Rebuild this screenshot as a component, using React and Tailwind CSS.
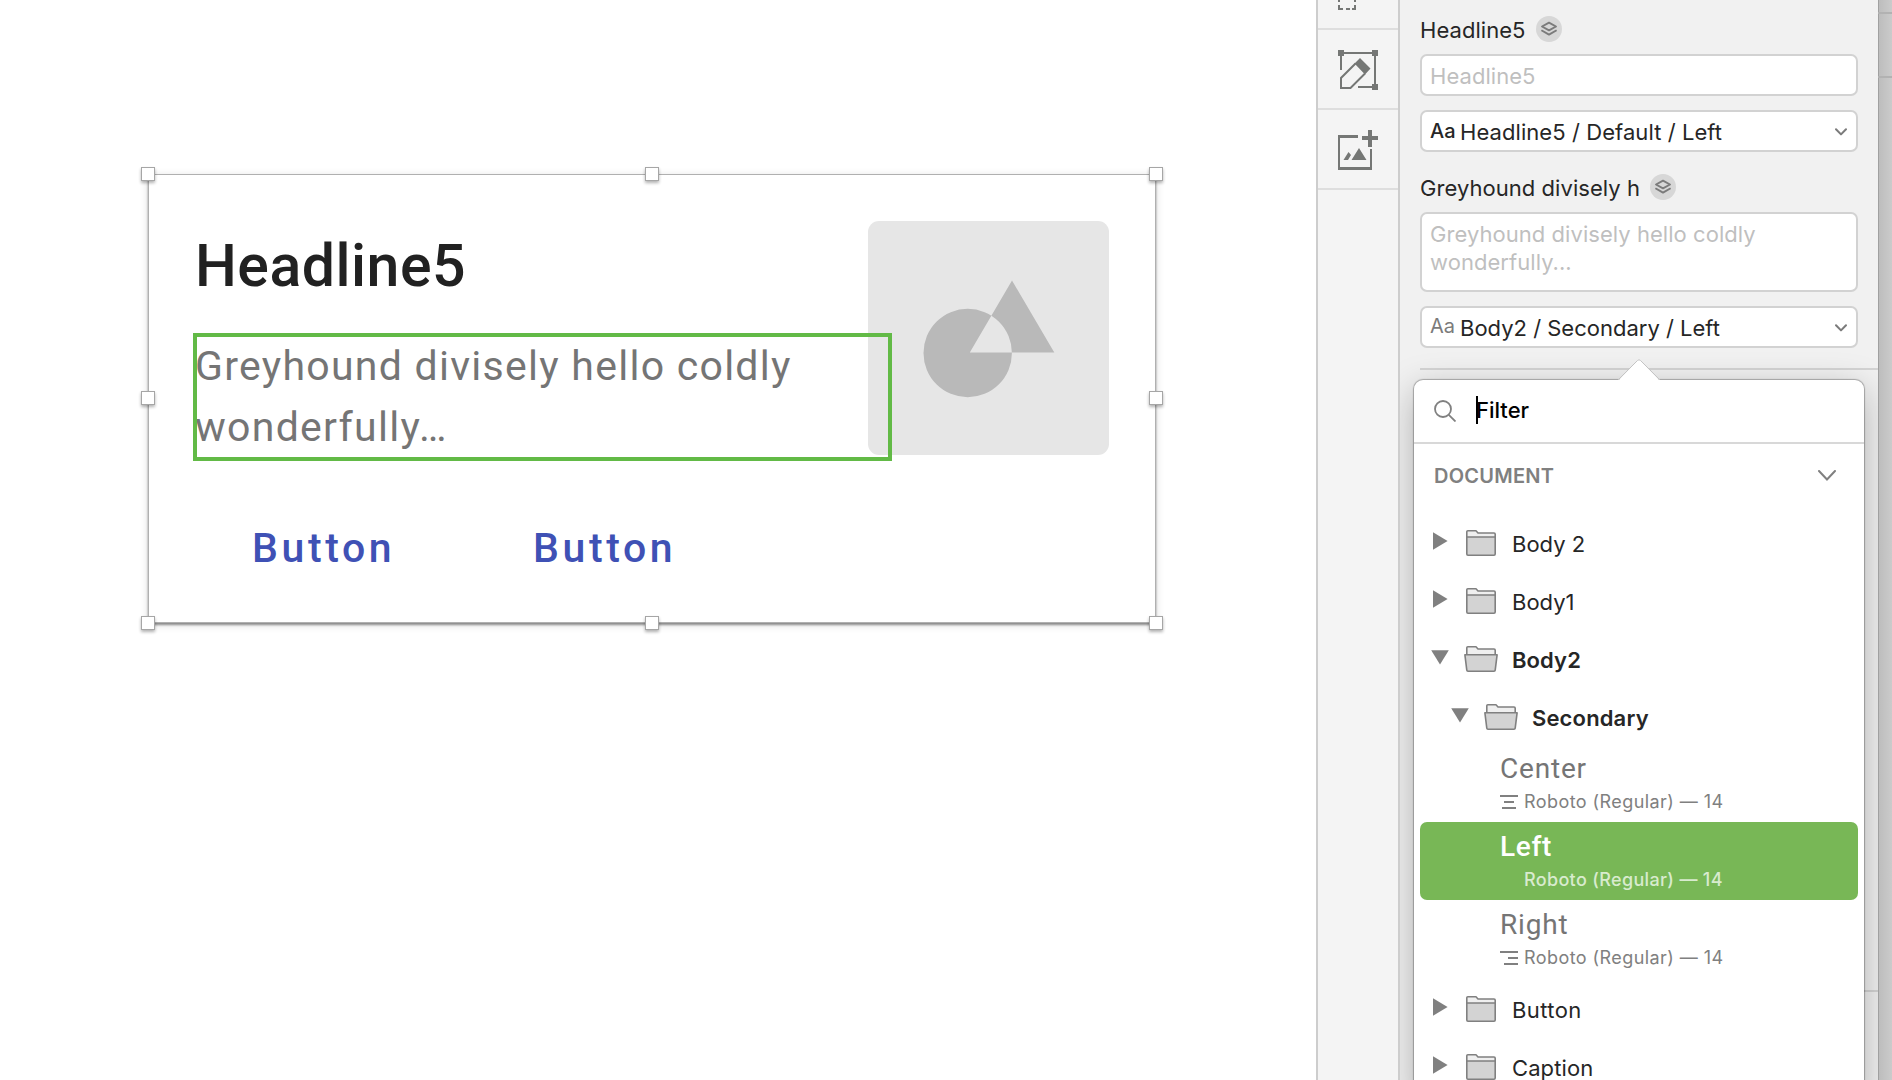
import React from "react";

const Handle = ({ pos }) => (
  <div className={`absolute size-[14px] border border-[#a6a6a6] bg-white shadow-[0_2px_3px_rgba(0,0,0,0.3)] ${pos}`} />
);

const handles = [
  "-left-[8px] -top-[8px]",
  "left-[496px] -top-[8px]",
  "left-[1000px] -top-[8px]",
  "-left-[8px] top-[216px]",
  "left-[1000px] top-[216px]",
  "-left-[8px] top-[441px]",
  "left-[496px] top-[441px]",
  "left-[1000px] top-[441px]",
];

const ShapesArt = () => (
  <svg viewBox="0 0 241 234" className="h-[234px] w-[241px]">
    <path
      fillRule="evenodd"
      fill="#b9b9b9"
      d="M55.5 132a44.2 44.2 0 1 0 88.4 0a44.2 44.2 0 1 0 -88.4 0ZM144 59.5L186.3 131.5H101.8Z"
    />
  </svg>
);

const Layers = () => (
  <span className="grid size-[26px] place-items-center rounded-full bg-[#d7d7d7]">
    <svg viewBox="0 0 18 16" className="h-4 w-[18px]" fill="none" stroke="#7b7b7b" strokeWidth="1.9" strokeLinejoin="round">
      <path d="M9 1.6L16 5.5L9 9.4L2 5.5Z" />
      <path d="M1.4 9.2L9 13.6L16.6 9.2" />
    </svg>
  </span>
);

const SmallChevron = () => (
  <svg viewBox="0 0 12 8" className="mt-px h-2 w-3" fill="none" stroke="#7b7b7b" strokeWidth="2" strokeLinecap="round" strokeLinejoin="round">
    <path d="M1 1.2L6 6.4L11 1.2" />
  </svg>
);

const Folder = ({ open }) =>
  open ? (
    <svg viewBox="0 0 34 26" className="h-[26px] w-[34px]" stroke="#808080" strokeWidth="1.6" strokeLinejoin="round">
      <path fill="#efefef" d="M2.8 9V1.8Q2.8 .8 3.8 .8H12L14 3H30Q31.2 3 31.2 4.2V9" />
      <path fill="#d3d3d3" d="M.9 8.8H33.1L31.2 24.2Q31.1 25.2 30 25.2H4Q2.9 25.2 2.8 24.2Z" />
    </svg>
  ) : (
    <svg viewBox="0 0 34 26" className="h-[26px] w-[34px]" stroke="#808080" strokeWidth="1.6" strokeLinejoin="round">
      <path fill="#efefef" d="M2.8 7V1.8Q2.8 .8 3.8 .8H12L14 3H30Q31.2 3 31.2 4.2V7" />
      <path fill="#d3d3d3" d="M2.8 7H31.2V24Q31.2 25.2 30 25.2H4Q2.8 25.2 2.8 24Z" />
    </svg>
  );

const FolderRow = ({ label, open, nested, tracking }) => (
  <div className={`flex h-[58px] items-center ${nested ? "pl-9" : "pl-4"}`}>
    <svg viewBox="0 0 20 20" className={`h-5 w-5 ${open ? "mt-[2px]" : ""}`} fill="#808080">
      {open ? <path d="M1.2 2.2H18.8L10 16.6Z" /> : <path d="M3 1.2V18.8L17.6 10Z" />}
    </svg>
    <div className="ml-[14px] mt-[4px]">
      <Folder open={open} />
    </div>
    <div className={`ml-[14px] mt-[6px] whitespace-nowrap text-[22px] leading-7 text-[#262626] ${open ? "font-semibold" : ""} ${tracking}`}>
      {label}
    </div>
  </div>
);

const AlignIcon = ({ kind }) => (
  <svg viewBox="0 0 18 14" className="mb-px h-[14px] w-[18px]" fill="none" stroke="#808080" strokeWidth="2">
    {kind === "center" && <path d="M0 1H18M4 7H14M2 13H16" />}
    {kind === "right" && <path d="M0 1H18M8 7H18M4 13H18" />}
  </svg>
);

const StyleRow = ({ label, kind, selected, tracking }) => (
  <div className={`mx-[6px] flex h-[78px] flex-col rounded-[7px] pl-20 ${selected ? "bg-[#78b756] text-white" : "text-[#757575]"}`}>
    <div className={`mt-[8px] h-[34px] font-[Roboto] text-[28px] leading-[34px] ${selected ? "font-medium" : ""} ${tracking}`}>{label}</div>
    <div className="mt-[4px] flex h-6 items-center gap-[6px]">
      <AlignIcon kind={kind} />
      <span className={`whitespace-nowrap text-[18px] leading-6 ${selected ? "font-medium tracking-[0.33px] text-[#d8ebce]" : "tracking-[0.43px] text-[#808080]"}`}>
        Roboto (Regular) — 14
      </span>
    </div>
  </div>
);

const SelectBox = ({ label, strong }) => (
  <div className="flex h-[42px] w-[438px] items-center rounded-[7px] border-2 border-[#d2d2d2] bg-white pl-2 pr-[9px]">
    <span className={`w-[30px] text-[20px] ${strong ? "font-medium text-[#262626]" : "pb-[3px] text-[#7b7b7b]"}`}>Aa</span>
    <span className={`mt-[2px] flex-1 whitespace-nowrap text-[22px] leading-7 text-[#262626] ${strong ? "tracking-[0.07px]" : "tracking-normal"}`}>{label}</span>
    <SmallChevron />
  </div>
);

const Toolbar = () => (
  <div className="flex w-[84px] shrink-0 flex-col border-x-2 border-[#cdcdcd] bg-[#f4f4f4]">
    <div className="h-[30px] border-b-2 border-[#dedede] pl-5">
      <svg viewBox="0 0 18 10" className="h-[10px] w-[18px]" fill="none" stroke="#757775" strokeWidth="2">
        <path d="M1 0V2M17 0V2M1 5V9H5M8 9H12M14 9H17V5" />
      </svg>
    </div>
    <div className="grid h-20 place-items-center border-b-2 border-[#dedede] pt-[2px]">
      <svg viewBox="0 0 40 40" className="size-10" fill="none" stroke="#757775" strokeWidth="2">
        <path d="M3 20V3H37V37H20" />
        <path fill="#757775" stroke="none" d="M0 0H6V6H0ZM34 0H40V6H34ZM34 34H40V40H34ZM22 8L32.5 18.5L27 24.5L16.5 13.5Z" />
        <path d="M17.5 13.5L3 28V38H12.5L27 23.5" />
      </svg>
    </div>
    <div className="grid h-20 place-items-center border-b-2 border-[#dedede] pt-[2px]">
      <svg viewBox="0 0 40 40" className="size-10" fill="none" stroke="#757775" strokeWidth="2">
        <path d="M20 6H1V38.5H33V19" />
        <path strokeWidth="3" d="M0 38.5H34" />
        <path strokeWidth="3" d="M0 6.5H20" />
        <path strokeWidth="4" d="M24 8H40M32 0V17" />
        <path fill="#757775" stroke="none" d="M13.5 30L21 18L28.5 30ZM5.5 30L10.5 22L13 25L10 30Z" />
      </svg>
    </div>
  </div>
);

const Popover = () => (
  <div className="absolute left-[14px] top-[380px] h-[720px] w-[450px] rounded-[9px] bg-white shadow-[0_0_1px_1px_rgba(0,0,0,0.28),0_10px_36px_rgba(0,0,0,0.28)]">
    <svg viewBox="0 0 42 22" className="absolute -top-[21px] left-[204px] h-[22px] w-[42px]">
      <path d="M0 22L19.5 1.5Q21 0 22.5 1.5L42 22Z" fill="#fff" />
      <path d="M0 21L19.5 1.5Q21 0 22.5 1.5L42 21" fill="none" stroke="#c4c4c4" strokeWidth="1" />
    </svg>
    <div className="flex h-16 items-center border-b-2 border-[#d8d8d8] pl-5">
      <svg viewBox="0 0 22 22" className="size-[22px]" fill="none" stroke="#808080" strokeWidth="1.8">
        <circle cx="9" cy="9" r="8" />
        <path d="M14.8 14.8L21.5 21.5" />
      </svg>
      <span className="mb-[2px] ml-5 h-7 w-[2px] bg-black" />
      <span className="-ml-[2px] mb-[2px] text-[22px] font-medium leading-7 tracking-normal text-black">Filter</span>
    </div>
    <div className="flex h-[68px] items-center justify-between pb-1 pl-[20px] pr-7">
      <span className="text-[20px] font-semibold tracking-[0.25px] text-[#808080]">DOCUMENT</span>
      <svg viewBox="0 0 18 11" className="mb-[2px] h-[11px] w-[18px]" fill="none" stroke="#808080" strokeWidth="2" strokeLinecap="round">
        <path d="M1 1L9 9.5L17 1" />
      </svg>
    </div>
    <FolderRow label="Body 2" tracking="tracking-normal" />
    <FolderRow label="Body1" tracking="tracking-normal" />
    <FolderRow label="Body2" open tracking="tracking-[0.1px]" />
    <FolderRow label="Secondary" open nested tracking="tracking-[0.15px]" />
    <StyleRow label="Center" kind="center" tracking="tracking-[0.8px]" />
    <StyleRow label="Left" kind="left" selected tracking="tracking-[0.7px]" />
    <StyleRow label="Right" kind="right" tracking="tracking-[0.8px]" />
    <FolderRow label="Button" tracking="tracking-[0.4px]" />
    <FolderRow label="Caption" tracking="tracking-[0.1px]" />
  </div>
);

const Inspector = () => (
  <div className="relative flex w-[478px] shrink-0 flex-col overflow-hidden bg-[#f1f1f1] pl-5">
    <div className="flex h-[54px] items-center gap-[10px] pb-1 pt-[8px] text-[22px] text-[#262626]">
      <span className="pt-[2px] tracking-[0.05px]">Headline5</span>
      <Layers />
    </div>
    <div className="h-[42px] w-[438px] rounded-[7px] border-2 border-[#d2d2d2] bg-white pl-2 pt-[6px] text-[22px] leading-7 tracking-[0.05px] text-[#bfbfbf]">
      Headline5
    </div>
    <div className="mt-[14px]">
      <SelectBox label="Headline5 / Default / Left" strong />
    </div>
    <div className="flex h-[60px] items-center gap-[10px] pt-[10px] text-[22px] text-[#262626]">
      <span className="whitespace-nowrap pt-[2px] tracking-[0.05px]">Greyhound divisely h</span>
      <Layers />
    </div>
    <div className="h-20 w-[438px] whitespace-pre rounded-[7px] border-2 border-[#d2d2d2] bg-white pl-2 pt-[6px] text-[22px] leading-7 tracking-[0.05px] text-[#bfbfbf]">
      {"Greyhound divisely hello coldly\nwonderfully..."}
    </div>
    <div className="mt-[14px]">
      <SelectBox label="Body2 / Secondary / Left" />
    </div>
    <div className="mt-5 h-[2px] shrink-0 bg-[#d4d4d4]" />
    <div className="mt-[620px] h-[2px] shrink-0 bg-[#d4d4d4]" />
    <Popover />
  </div>
);

export default function App() {
  return (
    <div className="flex h-[1080px] w-[1892px] overflow-hidden bg-white font-[Inter,sans-serif]">
      <div className="w-[1316px] shrink-0 pl-[148px] pt-[174px]">
        <div className="relative flex h-[449px] w-[1008px] flex-col border border-[#b0b0b0] bg-white pl-[46px] font-[Roboto,sans-serif] shadow-[0_2px_2px_rgba(0,0,0,0.4),0_2px_8px_rgba(0,0,0,0.14)]">
          <div className="flex">
            <div className="w-[673px] shrink-0">
              <div className="mt-[56px] h-[70px] text-[59px] font-medium leading-[70px] tracking-[0.5px] text-[#212121]">Headline5</div>
              <div className="relative -ml-[2px] mt-[32px] h-[128px] w-[699px]">
                <div className="absolute inset-0 z-10 border-4 border-[#62ba46]" />
                <div className="whitespace-pre pl-[2px] pt-[3px] text-[41px] leading-[61px] tracking-[1.27px] text-[#757575]">
                  {"Greyhound divisely hello coldly\nwonderfully…"}
                </div>
              </div>
            </div>
            <div className="mt-[46px] h-[234px] rounded-[11px] bg-[#e6e6e6]">
              <ShapesArt />
            </div>
          </div>
          <div className="ml-[57px] mt-[63px] flex h-12 text-[41px] font-medium leading-[48px] tracking-[3.6px] text-[#3f51b5]">
            <div className="w-[281px]">Button</div>
            <div>Button</div>
          </div>
          {handles.map((p) => (
            <Handle key={p} pos={p} />
          ))}
        </div>
      </div>
      <Toolbar />
      <Inspector />
      <div className="flex w-[14px] shrink-0 flex-col bg-linear-to-r from-[#bcbcbc] to-[#cbcbcb] shadow-[inset_1px_0_0_#a0a0a0]">
        <div className="mt-3 h-[2px] bg-[#b2b2b2]" />
        <div className="mt-[62px] h-[2px] bg-[#b2b2b2]" />
      </div>
    </div>
  );
}
